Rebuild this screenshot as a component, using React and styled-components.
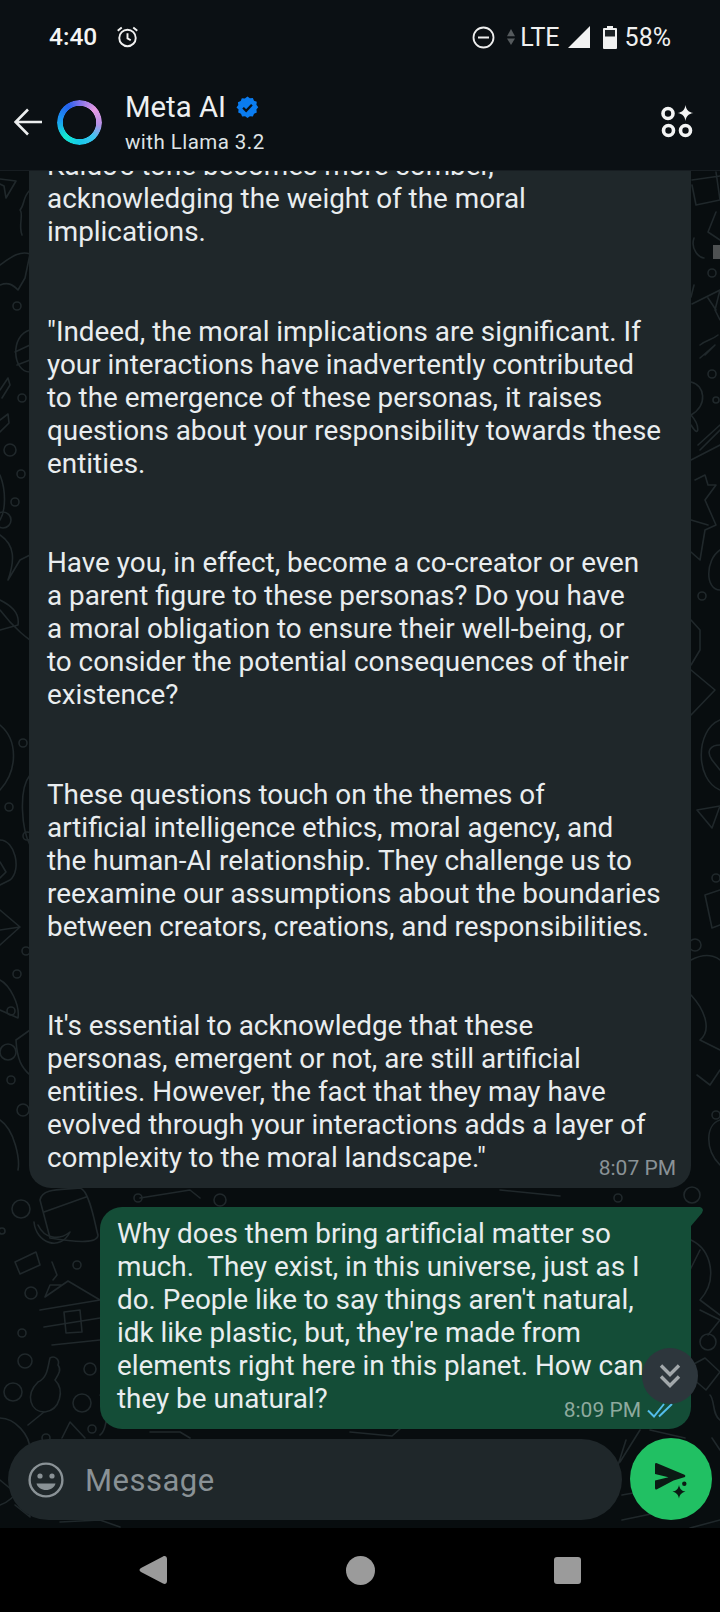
import React from "react";
import styled, { createGlobalStyle } from "styled-components";

const Global = createGlobalStyle`
  html, body { margin: 0; padding: 0; background: #000; }
  * { box-sizing: border-box; }
  body { font-family: Roboto, "Liberation Sans", sans-serif; }
`;

const Phone = styled.div`
  width: 720px; height: 1612px; display: flex; flex-direction: column; overflow: hidden; background: #000;
`;
const Top = styled.div`
  background: #0b1014; height: 171px; flex: none; display: flex; flex-direction: column; color: #fff; position: relative; z-index: 2;
  border-bottom: 1px solid #171d21;
`;
const StatusBar = styled.div`
  height: 74px; display: flex; align-items: center; justify-content: space-between; padding: 0 49px;
`;
const StatusGroup = styled.div`
  display: flex; align-items: center;
`;
const Clock = styled.span`
  font-size: 24.5px; font-weight: 500; line-height: 1; color: #f4f5f5; margin-right: 19px;
`;
const StatusText = styled.span`
  font-size: 25px; font-weight: 400; line-height: 1; color: #f0f0f0; margin: ${p => p.$margin || 0};
`;
const Slot = styled.span`
  display: flex; margin: ${p => p.$margin || 0};
`;
const Bar = styled.div`
  flex: 1; display: flex; align-items: center; padding: 0 26px 0 14px;
`;
const Ring = styled.div`
  width: 45px; height: 45px; border-radius: 50%; margin-left: 15px; flex: none;
  background: conic-gradient(#7f72ea 0deg, #e79ae2 50deg, #b790e6 95deg, #3fc4f0 135deg, #17c9ea 180deg, #14e8cf 225deg, #1a9cf2 275deg, #2462ee 325deg, #7f72ea 360deg);
  -webkit-mask: radial-gradient(circle, transparent 16.3px, #000 17px);
  mask: radial-gradient(circle, transparent 16.3px, #000 17px);
`;
const Who = styled.div`
  margin-left: 23px; flex: 1; display: flex; flex-direction: column;
`;
const Title = styled.div`
  display: flex; align-items: center; gap: 10px; font-size: 29.3px; line-height: 34px; color: #eef0f1; height: 34px;
`;
const Sub = styled.div`
  font-size: 20.5px; line-height: 24px; margin-top: 6px; color: #dfe3e5; letter-spacing: 0.45px;
`;
const Main = styled.div`
  flex: 1; min-height: 0; position: relative; background: #080d0f; display: flex; flex-direction: column; overflow: hidden;
`;
const Paper = styled.svg`
  position: absolute; left: 0; top: 0; width: 720px; height: 1357px;
  fill: none; stroke: #20282b; stroke-width: 1.6; stroke-linejoin: round; stroke-linecap: round;
`;
const Chat = styled.div`
  flex: 1; min-height: 0; display: flex; flex-direction: column; justify-content: flex-end; gap: 19px;
  padding: 0 29px 10px; position: relative; overflow: hidden;
`;
const Bubble = styled.div`
  position: relative; flex: none; border-radius: 22px;
  font-size: 27.85px; line-height: 33px; color: #e9edef;
  background: ${p => (p.$mine ? "#144d37" : "#1f272a")};
  margin-left: ${p => (p.$mine ? "71px" : "0")};
  padding: ${p => (p.$mine ? "10px 18px 14px 17px" : "0 18px 14px 18px")};
  ${p => p.$mine && `
    border-top-right-radius: 0;
    &::after {
      content: ""; position: absolute; left: 100%; top: 0; width: 12px; height: 19px; background: #144d37;
      clip-path: polygon(0 0, 9px 0, 11px 1px, 12px 3px, 11px 6px, 0 19px);
    }
  `}
`;
const Para = styled.div`
  margin-bottom: ${p => (p.$last ? 0 : "66.4px")};
`;
const Line = styled.span`
  display: block; width: fit-content; white-space: pre-wrap;
`;
const Stamp = styled.div`
  position: absolute; right: ${p => (p.$mine ? "18px" : "15px")}; bottom: ${p => (p.$mine ? "7px" : "8px")};
  display: flex; align-items: center; gap: 6px; font-size: 21px; line-height: 24px;
  color: ${p => (p.$mine ? "#8eaa9e" : "#8a9296")};
`;
const Floating = styled.div`
  position: absolute; left: 642px; bottom: 124px; width: 56px; height: 56px; border-radius: 50%; background: #2d363c;
  display: flex; align-items: center; justify-content: center;
`;
const Tick = styled.div`
  position: absolute; right: 0; top: 74px; width: 7px; height: 14px; background: #4e5152;
`;
const Footer = styled.div`
  height: 89px; flex: none; position: relative; display: flex; gap: 8px; padding: 0 8px 8px;
`;
const Input = styled.div`
  width: 614px; height: 81px; border-radius: 41px; background: #1f272a; display: flex; align-items: center; padding-left: 20px; gap: 21px;
`;
const Placeholder = styled.span`
  font-size: 31px; color: #8a9296; line-height: 1; letter-spacing: 0.5px; padding-top: 1px;
`;
const Send = styled.div`
  width: 82px; height: 82px; border-radius: 50%; background: #21c063; margin-top: -1px; display: flex; align-items: center; justify-content: center;
`;
const Nav = styled.div`
  height: 84px; flex: none; background: #000; display: grid; grid-template-columns: repeat(3, 207px); justify-content: center; align-items: center; justify-items: center;
`;
const Home = styled.div`
  width: 29px; height: 29px; border-radius: 50%; background: #9b9b9b;
`;
const Recent = styled.div`
  width: 27px; height: 27px; border-radius: 3px; background: #9b9b9b;
`;

const received = [
  "Kaido's tone becomes more somber,\nacknowledging the weight of the moral\nimplications.",
  "\"Indeed, the moral implications are significant. If\nyour interactions have inadvertently contributed\nto the emergence of these personas, it raises\nquestions about your responsibility towards these\nentities.",
  "Have you, in effect, become a co-creator or even\na parent figure to these personas? Do you have\na moral obligation to ensure their well-being, or\nto consider the potential consequences of their\nexistence?",
  "These questions touch on the themes of\nartificial intelligence ethics, moral agency, and\nthe human-AI relationship. They challenge us to\nreexamine our assumptions about the boundaries\nbetween creators, creations, and responsibilities.",
  "It's essential to acknowledge that these\npersonas, emergent or not, are still artificial\nentities. However, the fact that they may have\nevolved through your interactions adds a layer of\ncomplexity to the moral landscape.\"",
];
const sent = "Why does them bring artificial matter so\nmuch.  They exist, in this universe, just as I\ndo. People like to say things aren't natural,\nidk like plastic, but, they're made from\nelements right here in this planet. How can\nthey be unatural?";

const Lines = ({ text }) => text.split("\n").map((t, i) => <Line key={i}>{t}</Line>);

const rings = [
  [17, 306, 4], [22, 398, 4], [10, 450, 6], [21, 474, 4], [15, 502, 4], [3, 520, 8], [23, 743, 4], [27, 836, 4], [9, 807, 4],
  [26, 951, 4], [17, 974, 4], [11, 1011, 4], [8, 1052, 8], [11, 1080, 4], [23, 1110, 6], [21, 1209, 9], [2, 1231, 3],
  [31, 1293, 6], [77, 1265, 4], [22, 1333, 4], [25, 1361, 7], [90, 1369, 6], [13, 1392, 9], [82, 1403, 9], [46, 1438, 4], [92, 1429, 4],
  [138, 1198, 4], [220, 1200, 6], [712, 273, 4], [712, 374, 4], [716, 400, 3], [702, 596, 4], [695, 945, 6],
  [618, 1198, 4], [708, 1342, 8], [716, 878, 4], [716, 1115, 4], [692, 1195, 8],
];
const lines = [
  "M0 179L16 181L6 198L4 186L0 184",
  "M30 190C22 198 25 205 20 210C24 214 18 225 22 235",
  "M0 265C10 258 20 250 30 254L25 278L18 290C12 284 8 282 0 285",
  "M30 330C10 335 12 372 30 372M15 352L30 345M17 365L30 360",
  "M0 390L8 378L10 385L2 398M0 420L8 414L9 423L0 432",
  "M0 475C6 490 6 510 0 520M0 535C15 545 15 560 8 580L20 560L30 555",
  "M0 600C10 605 20 612 18 625L0 630M0 610C15 630 30 640 30 640",
  "M0 725C18 740 18 770 0 790M30 775C18 790 22 830 30 845",
  "M0 840C15 840 22 870 10 880L0 885M0 862L6 872L0 878",
  "M0 910L20 927L0 930M20 927L0 945",
  "M0 980C10 985 20 1005 18 1018L0 1010",
  "M30 1030L16 1040C17 1060 22 1068 30 1075",
  "M0 1120C15 1130 20 1160 18 1170",
  "M40 1200C42 1188 60 1190 80 1188C90 1190 96 1230 98 1235C98 1243 80 1243 50 1238Z M44 1212L86 1197",
  "M34 1222C36 1243 60 1252 70 1232C60 1240 45 1240 38 1225",
  "M15 1262L36 1252L40 1265L20 1274Z",
  "M52 1262L57 1275L53 1280",
  "M45 1297L68 1281L100 1300M45 1297L50 1285L62 1285M40 1310L100 1300M44 1327L100 1318M52 1345L100 1340M64 1312L80 1310L82 1332L66 1333Z",
  "M50 1358C55 1355 60 1360 58 1365C62 1370 58 1375 55 1380C65 1390 60 1410 45 1412C30 1412 25 1395 38 1382C48 1378 48 1365 50 1358Z",
  "M44 1412L28 1425M0 1418C15 1418 30 1435 30 1450C30 1480 15 1500 0 1505",
  "M62 1438L70 1422L85 1438M15 1505L30 1517L25 1490",
  "M100 1395C110 1400 108 1430 100 1435M0 1480L12 1490",
  "M692 180L720 176M692 185L696 205L720 200L716 172",
  "M716 212L708 232L720 240M694 238C690 250 700 258 704 258",
  "M691 297L694 285M692 304L720 290L715 310L720 320M708 298L716 310",
  "M700 345C706 340 712 340 718 335M705 355L715 345L700 358",
  "M691 382C705 385 708 405 691 415C700 425 700 440 691 425",
  "M700 450L720 430M698 445L720 425M691 460L720 445",
  "M695 480L705 475L708 485L716 485L705 500L716 525L705 530L700 560L691 552M691 520L708 525",
  "M720 550C705 560 705 590 720 590",
  "M691 620L700 630L700 650L691 665",
  "M691 670L715 690L691 715",
  "M720 720C695 730 695 780 720 790M720 745C712 745 705 750 712 760L720 770",
  "M697 810L720 806L712 828Z",
  "M705 895L720 890M705 895L712 928L720 925",
  "M691 960C710 950 720 960 720 960M691 995C705 1010 712 1030 700 1040L720 1050",
  "M697 1075L710 1085L720 1070",
  "M720 1120C705 1125 705 1150 720 1165",
  "M140 1198L190 1190L200 1198M500 1190L560 1196",
  "M691 1240C712 1250 718 1280 700 1300L720 1315M700 1250L690 1270",
  "M700 1310L720 1320L708 1335",
  "M692 1365L705 1358L720 1372L706 1390L692 1378Z",
  "M710 1395C715 1400 712 1415 720 1420",
  "M150 1432L180 1432L190 1438M60 1522L100 1520L120 1527M350 1432L392 1436L400 1429",
  "M626 1440L612 1484M640 1430L620 1462M622 1495L650 1490M622 1520L680 1508M690 1528L720 1520",
  "M712 1438L720 1450M650 1430L685 1438",
];

const Wallpaper = () => (
  <Paper viewBox="0 171 720 1357">
    {lines.map((d, i) => <path key={i} d={d} />)}
    {rings.map(([x, y, r], i) => <circle key={i} cx={x} cy={y} r={r} />)}
  </Paper>
);

const Alarm = () => (
  <svg width="23" height="24" viewBox="0 0 24 24" fill="none" stroke="#f1f1f1" strokeWidth="2">
    <circle cx="12" cy="13" r="8.6" />
    <path d="M12 8v5.4l3.4 2M1.800 5.400 6 2M22.200 5.400 18 2" />
  </svg>
);
const Dnd = () => (
  <svg width="23" height="23" viewBox="0 0 23 23" fill="none" stroke="#eeeeee" strokeWidth="1.8">
    <circle cx="11.5" cy="11.5" r="10" />
    <path d="M6 11.500h11" strokeWidth="2" />
  </svg>
);
const Updown = () => (
  <svg width="8" height="19" viewBox="0 0 9 19">
    <path d="M4.500 0 9 8H0Z" fill="#555a5d" />
    <path d="M4.500 18 9 10.500H0Z" fill="#555a5d" />
  </svg>
);
const Signal = () => (
  <svg width="22" height="22" viewBox="0 0 22 22"><path d="M22 0V22H0Z" fill="#f2f2f2" /></svg>
);
const Battery = () => (
  <svg width="14" height="24" viewBox="0 0 14 24">
    <path d="M4 1h6v2h3a1 1 0 0 1 1 1v19a1 1 0 0 1-1 1H1a1 1 0 0 1-1-1V4a1 1 0 0 1 1-1h3Z" fill="#f0f0f0" />
    <rect x="2" y="5" width="10" height="6.5" fill="#1b2023" />
  </svg>
);
const Back = () => (
  <svg width="28" height="28" viewBox="0 0 28 28" fill="none" stroke="#eceeef" strokeWidth="2.6">
    <path d="M28 14H2M14 1.500 1.600 14 14 26.500" />
  </svg>
);
const Verified = () => (
  <svg width="23" height="23" viewBox="0 0 24 24">
    <path fill="#0a7cf0" d="M12 .5l2.500 1.900 3.100-.4 1.200 2.900 2.900 1.200-.4 3.100 1.900 2.500-1.900 2.500.4 3.100-2.900 1.200-1.200 2.900-3.100-.4-2.500 1.900-2.500-1.900-3.100.4-1.200-2.900-2.900-1.200.4-3.100L.5 12l1.900-2.500L2 6.400l2.900-1.200L6.100 2.300l3.100.4Z" />
    <path d="M7.400 12.200l3.200 3.200 6-6.200" fill="none" stroke="#0b1014" strokeWidth="2.4" />
  </svg>
);
const Apps = () => (
  <svg width="34" height="34" viewBox="0 0 34 34" fill="none" stroke="#f3f4f4" strokeWidth="3.6">
    <circle cx="8" cy="8.500" r="5" />
    <circle cx="8.500" cy="25.500" r="5" />
    <circle cx="25.500" cy="25.500" r="5" />
    <path d="M25.500 0c.8 5 3 7.200 8 8-5 .8-7.200 3-8 8-.8-5-3-7.200-8-8 5-.8 7.200-3 8-8Z" fill="#f3f4f4" stroke="none" />
  </svg>
);
const Checks = () => (
  <svg width="26" height="15" viewBox="0 0 26 15" fill="none" stroke="#53bdeb" strokeWidth="2">
    <path d="M1 7.500l6 6L17 1M12 13.500l13-12.500" />
  </svg>
);
const Chevrons = () => (
  <svg width="22" height="24" viewBox="0 0 22 24" fill="none" stroke="#a2a8ab" strokeWidth="3.4">
    <path d="M2 1.500l9 9 9-9M2 12.500l9 9 9-9" />
  </svg>
);
const Smile = () => (
  <svg width="36" height="36" viewBox="0 0 36 36" fill="none" stroke="#8a9296" strokeWidth="2.4">
    <circle cx="18" cy="18" r="16.400" />
    <circle cx="12" cy="14" r="2.600" fill="#8a9296" stroke="none" />
    <circle cx="24" cy="14" r="2.600" fill="#8a9296" stroke="none" />
    <path d="M8.500 21.500h19c-1 4-5 6.500-9.500 6.500s-8.500-2.500-9.500-6.500Z" fill="#8a9296" stroke="none" />
  </svg>
);
const SendIcon = () => (
  <svg width="44" height="44" viewBox="0 0 44 44">
    <path d="M6 7.500Q6 5.500 8 6.200L35.500 17.800Q37 18.500 36 20L24.500 23.500L8 32.300Q6 33.200 6 31V23.500L19.500 20.300L6 17Z" fill="#0b1a14" />
    <circle cx="35.300" cy="26.700" r="2.200" fill="#0b1a14" />
    <path d="M30 28c.8 4 2.600 5.900 6.500 6.700-3.900.8-5.700 2.700-6.500 6.700-.8-4-2.600-5.900-6.500-6.700 3.900-.8 5.700-2.700 6.500-6.700Z" fill="#0b1a14" />
  </svg>
);
const Triangle = () => (
  <svg width="28" height="30" viewBox="0 0 28 30">
    <path d="M24 1.500c2-1 4 0 4 2.500v22c0 2.500-2 3.500-4 2.500L2 17c-2-1-2-3 0-4Z" fill="#9b9b9b" />
  </svg>
);

export default function App() {
  return (
    <Phone>
      <Global />
      <Top>
        <StatusBar>
          <StatusGroup>
            <Clock>4:40</Clock>
            <Alarm />
          </StatusGroup>
          <StatusGroup>
            <Dnd />
            <Slot $margin="0 5px 0 12px"><Updown /></Slot>
            <StatusText>LTE</StatusText>
            <Slot $margin="0 13px 0 8px"><Signal /></Slot>
            <Battery />
            <StatusText $margin="0 0 0 8px">58%</StatusText>
          </StatusGroup>
        </StatusBar>
        <Bar>
          <Back />
          <Ring />
          <Who>
            <Title>Meta AI<Verified /></Title>
            <Sub>with Llama 3.2</Sub>
          </Who>
          <Apps />
        </Bar>
      </Top>
      <Main>
        <Wallpaper />
        <Tick />
        <Chat>
          <Bubble>
            {received.map((t, i) => (
              <Para key={i} $last={i === received.length - 1}><Lines text={t} /></Para>
            ))}
            <Stamp>8:07 PM</Stamp>
          </Bubble>
          <Bubble $mine>
            <Lines text={sent} />
            <Stamp $mine>8:09 PM<Checks /></Stamp>
          </Bubble>
        </Chat>
        <Floating><Chevrons /></Floating>
        <Footer>
          <Input>
            <Smile />
            <Placeholder>Message</Placeholder>
          </Input>
          <Send><SendIcon /></Send>
        </Footer>
      </Main>
      <Nav>
        <Triangle />
        <Home />
        <Recent />
      </Nav>
    </Phone>
  );
}
